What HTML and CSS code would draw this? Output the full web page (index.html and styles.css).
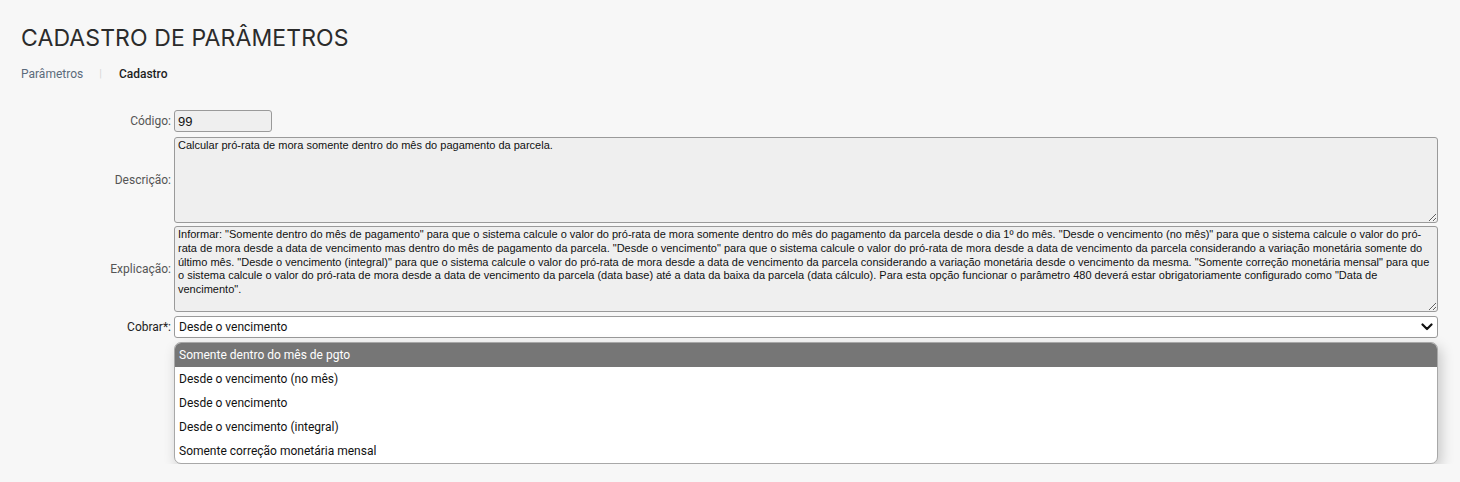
FILE: index.html
```html
<!DOCTYPE html>
<html lang="pt-BR">
<head>
<meta charset="utf-8">
<title>Cadastro de Parâmetros</title>
<link rel="stylesheet" href="styles.css">
</head>
<body>
<div class="page">
  <h1 class="title">CADASTRO DE PARÂMETROS</h1>
  <nav class="crumbs">
    <a class="crumb-link">Parâmetros</a>
    <span class="crumb-sep">|</span>
    <span class="crumb-current">Cadastro</span>
  </nav>
  <div class="form">
    <label class="lbl row-code">Código:</label>
    <div class="field row-code"><input class="inp-code" type="text" value="99" readonly></div>

    <label class="lbl row-desc">Descrição:</label>
    <div class="field row-desc"><textarea class="area" readonly>Calcular pró-rata de mora somente dentro do mês do pagamento da parcela.</textarea></div>

    <label class="lbl row-exp">Explicação:</label>
    <div class="field row-exp"><textarea class="area" readonly>Informar: "Somente dentro do mês de pagamento" para que o sistema calcule o valor do pró-rata de mora somente dentro do mês do pagamento da parcela desde o dia 1º do mês. "Desde o vencimento (no mês)" para que o sistema calcule o valor do pró-rata de mora desde a data de vencimento mas dentro do mês de pagamento da parcela. "Desde o vencimento" para que o sistema calcule o valor do pró-rata de mora desde a data de vencimento da parcela considerando a variação monetária somente do último mês. "Desde o vencimento (integral)" para que o sistema calcule o valor do pró-rata de mora desde a data de vencimento da parcela considerando a variação monetária desde o vencimento da mesma. "Somente correção monetária mensal" para que o sistema calcule o valor do pró-rata de mora desde a data de vencimento da parcela (data base) até a data da baixa da parcela (data cálculo). Para esta opção funcionar o parâmetro 480 deverá estar obrigatoriamente configurado como "Data de vencimento".</textarea></div>

    <label class="lbl lbl-req">Cobrar*:</label>
    <div class="field">
      <div class="select">
        <span class="select-value">Desde o vencimento</span>
        <svg class="chev" width="12" height="8" viewBox="0 0 12 8"><path d="M1.5 1.5 L6 6 L10.5 1.5" fill="none" stroke="#111" stroke-width="2.2" stroke-linecap="round" stroke-linejoin="round"/></svg>
      </div>
    </div>

    <div class="menu-spacer"></div>
    <ul class="menu">
      <li class="opt opt-active">Somente dentro do mês de pgto</li>
      <li class="opt">Desde o vencimento (no mês)</li>
      <li class="opt">Desde o vencimento</li>
      <li class="opt">Desde o vencimento (integral)</li>
      <li class="opt">Somente correção monetária mensal</li>
    </ul>
  </div>
</div>
</body>
</html>
```
FILE: styles.css
```css
html, body {
  margin: 0;
  padding: 0;
  background: #f7f7f7;
}
body {
  font-family: Roboto, "Liberation Sans", Arial, sans-serif;
  color: #333;
}
.page {
  padding: 24px 22px 0 21px;
}
.title {
  margin: 0;
  font-family: Inter, "Open Sans", sans-serif;
  font-weight: 400;
  font-size: 23px;
  line-height: 28px;
  color: #2b2b2b;
  letter-spacing: 0.1px;
}
.crumbs {
  display: flex;
  align-items: center;
  margin-top: 14px;
  font-size: 12px;
  line-height: 16px;
}
.crumb-link {
  color: #5b6b7b;
}
.crumb-sep {
  color: #d8d8d8;
  margin: 0 17px 0 16px;
  font-size: 11px;
}
.crumb-current {
  color: #1e1e1e;
  font-weight: 500;
}
.form {
  display: grid;
  grid-template-columns: 150px 1fr;
  column-gap: 3px;
  margin-top: 28px;
}
.lbl {
  font-size: 12px;
  color: #555;
  text-align: right;
  align-self: center;
}
.lbl-req {
  color: #222;
}
.field {
  display: flex;
}
.row-code {
  margin-bottom: 5px;
}
.row-desc {
  margin-bottom: 3px;
}
.row-exp {
  margin-bottom: 4px;
}
.inp-code {
  box-sizing: border-box;
  width: 98px;
  height: 22px;
  margin: 0;
  padding: 1px 3px;
  border: 1px solid #9a9a9a;
  border-radius: 3px;
  background: #efefef;
  font-family: "Liberation Sans", Arial, sans-serif;
  font-size: 13px;
  color: #111;
  outline: none;
}
.area {
  box-sizing: border-box;
  width: 100%;
  height: 86px;
  margin: 0;
  padding: 1px 3px;
  border: 1px solid #9a9a9a;
  border-radius: 3px;
  background: #efefef;
  font-family: "Liberation Sans", Arial, sans-serif;
  font-size: 11px;
  line-height: 13.75px;
  color: #111;
  resize: vertical;
  outline: none;
}
.select {
  box-sizing: border-box;
  width: 100%;
  height: 22px;
  display: flex;
  align-items: center;
  justify-content: space-between;
  padding: 0 4px 0 4px;
  border: 1px solid #9a9a9a;
  border-radius: 3px;
  background: #fff;
  font-size: 12px;
  color: #111;
}
.menu {
  margin: 4px 0 0 0;
  padding: 0;
  list-style: none;
  background: #fff;
  border: 1px solid #a8a8a8;
  border-radius: 7px;
  overflow: hidden;
  box-shadow: 3px 5px 14px rgba(0, 0, 0, 0.2);
}
.opt {
  height: 24px;
  line-height: 24px;
  padding: 0 4px;
  font-size: 12px;
  color: #111;
}
.opt-active {
  background: #767676;
  color: #fff;
}
```
